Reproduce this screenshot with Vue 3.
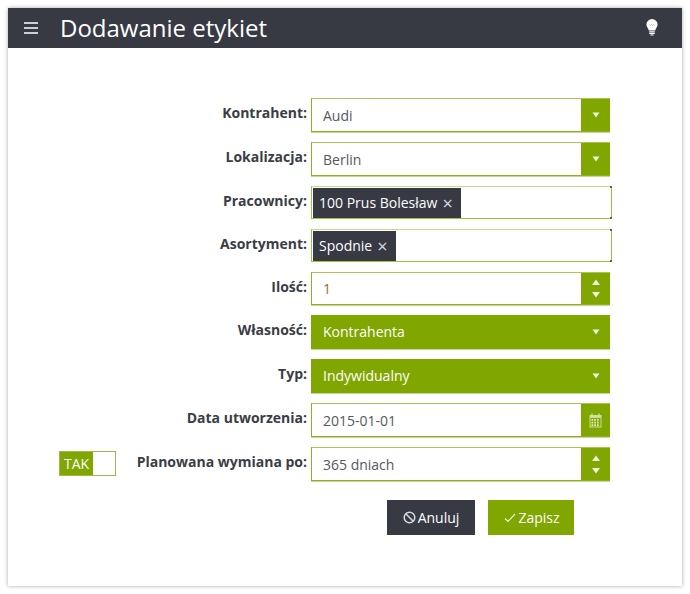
<script setup>
const wiersze = [
  { etykieta: 'Kontrahent:', wartosc: 'Audi', typ: 'select' },
  { etykieta: 'Lokalizacja:', wartosc: 'Berlin', typ: 'select' },
  { etykieta: 'Pracownicy:', tag: '100 Prus Bolesław', typ: 'tag', niski: true },
  { etykieta: 'Asortyment:', tag: 'Spodnie', typ: 'tag', niski: true },
  { etykieta: 'Ilość:', wartosc: '1', typ: 'spin', kolor: true, niski: true },
  { etykieta: 'Własność:', wartosc: 'Kontrahenta', typ: 'pelny' },
  { etykieta: 'Typ:', wartosc: 'Indywidualny', typ: 'pelny' },
  { etykieta: 'Data utworzenia:', wartosc: '2015-01-01', typ: 'data' },
  { etykieta: 'Planowana wymiana po:', wartosc: '365 dniach', typ: 'spin', przelacznik: true }
]
</script>

<template>
  <div class="strona">
    <div class="panel">
      <header class="naglowek">
        <svg class="menu" width="14" height="12" viewBox="0 0 14 12">
          <path d="M0 1h14M0 6h14M0 11h14" stroke="#fff" stroke-width="1.6" fill="none" />
        </svg>
        <h1 class="tytul">Dodawanie etykiet</h1>
        <svg class="zarowka" width="12" height="18" viewBox="0 0 12 18">
          <path d="M6 0a5.600 5.600 0 0 0-5.600 5.600c0 2.400 1.900 3.600 2.400 6h6.400c.5-2.400 2.400-3.600 2.400-6A5.600 5.600 0 0 0 6 0z" fill="#fff" />
          <path d="M3.500 5.500l1 1 1-1 1 1 1-1 1 1" stroke="#9a9ca2" stroke-width=".7" fill="none" />
          <path d="M3.200 12.800h5.600M3.200 14.400h5.600M4.400 16h3.200" stroke="#fff" stroke-width="1.100" fill="none" />
        </svg>
      </header>

      <form class="formularz">
        <div v-for="w in wiersze" :key="w.etykieta" class="wiersz" :class="{ niski: w.niski }">
          <div class="przelacznik-kol">
            <div v-if="w.przelacznik" class="przelacznik">
              <span class="tak">TAK</span>
              <span class="uchwyt"></span>
            </div>
          </div>
          <label class="etykieta">{{ w.etykieta }}</label>

          <div class="pole" :class="{ pelne: w.typ === 'pelny', tagi: w.typ === 'tag' }">
            <span v-if="w.typ === 'tag'" class="tag">{{ w.tag }}<span class="usun">×</span></span>
            <span v-else class="wartosc" :class="{ brazowa: w.kolor }">{{ w.wartosc }}</span>

            <span v-if="w.typ !== 'tag'" class="przycisk">
              <svg v-if="w.typ === 'select' || w.typ === 'pelny'" width="8" height="6" viewBox="0 0 8 6">
                <path d="M.5 .5h7L4 5.500z" fill="#eef3dc" />
              </svg>
              <svg v-else-if="w.typ === 'spin'" class="strzalki" width="8" height="19" viewBox="0 0 8 19">
                <path d="M0 6h8L4 .5z" fill="#eef3dc" />
                <path d="M0 13h8L4 18.500z" fill="#eef3dc" />
              </svg>
              <svg v-else width="13" height="15" viewBox="0 0 13 15">
                <path d="M.5 2h12v12.500H.5z" fill="#cfdd9e" />
                <path d="M3 .5v3M10 .5v3" stroke="#cfdd9e" stroke-width="1.400" />
                <path d="M1.500 5h10v8.500h-10z" fill="#80a600" />
                <path d="M2.500 6h1.700v1.700H2.500zM5.200 6h1.700v1.700H5.200zM8 6h1.700v1.700H8zM2.500 8.700h1.700v1.700H2.500zM5.200 8.700h1.700v1.700H5.200zM8 8.700h1.700v1.700H8zM2.500 11.300h1.700v1.700H2.500zM5.200 11.300h1.700v1.700H5.200zM8 11.300h1.700v1.700H8z" fill="#e4ecc4" />
              </svg>
            </span>
          </div>
        </div>

        <div class="akcje">
          <button type="button" class="btn anuluj">
            <svg width="13" height="13" viewBox="0 0 13 13">
              <circle cx="6.500" cy="6.500" r="5.300" stroke="#d8d9db" stroke-width="1.500" fill="none" />
              <path d="M2.800 2.800l7.400 7.400" stroke="#d8d9db" stroke-width="1.500" />
            </svg>
            Anuluj
          </button>
          <button type="button" class="btn zapisz">
            <svg width="12" height="10" viewBox="0 0 12 10">
              <path d="M1 5.500l3 3L11 1" stroke="#eef3dc" stroke-width="1.100" fill="none" />
            </svg>
            Zapisz
          </button>
        </div>
      </form>
    </div>
  </div>
</template>

<style>
html, body {
  margin: 0;
  background: #fff;
}
</style>

<style scoped>
.strona {
  width: 690px;
  height: 594px;
  padding: 8px;
  box-sizing: border-box;
  font-family: "Open Sans", sans-serif;
}

.panel {
  width: 674px;
  height: 578px;
  background: #fff;
  box-shadow: 0 0 4px rgba(0, 0, 0, 0.35);
}

.naglowek {
  height: 40px;
  background: #373a43;
  display: flex;
  align-items: center;
  color: #fff;
  padding: 0 24px 0 16px;
}

.menu {
  flex: none;
}

.tytul {
  margin: 0 0 1px 22px;
  font-size: 24px;
  font-weight: 400;
  flex: 1;
}

.formularz {
  padding: 50px 72px 0 51px;
}

.wiersz {
  display: grid;
  grid-template-columns: 57px 191px 299px;
  height: 34px;
  margin-bottom: 10px;
  align-items: start;
}

.wiersz.niski {
  height: 33px;
}

.przelacznik {
  width: 57px;
  height: 25px;
  margin-top: 4px;
  box-sizing: border-box;
  border: 1px solid #9fb94f;
  display: flex;
}

.tak {
  width: 33px;
  background: #80a600;
  color: #fff;
  font-size: 14px;
  line-height: 23px;
  text-align: center;
}

.uchwyt {
  flex: 1;
  background: #fff;
}

.etykieta {
  text-align: right;
  font-size: 14px;
  font-weight: 700;
  line-height: 30px;
  color: #3a3d46;
}

.pole {
  margin-left: 4px;
  width: 299px;
  height: 34px;
  box-sizing: border-box;
  border: 1px solid #8fb021;
  border-top-color: #a8c452;
  box-shadow: 0 1px 0 #c5d69a;
  display: flex;
  align-items: center;
  justify-content: space-between;
  background: #fff;
}

.niski .pole {
  height: 33px;
}

.pole.tagi {
  position: relative;
  width: 301px;
  justify-content: flex-start;
  padding-left: 1px;
  border-color: #99c43a;
  border-top-color: #c3dc8a;
  box-shadow: none;
}

/* male ciemne narozniki po prawej */
.pole.tagi::before,
.pole.tagi::after {
  content: "";
  position: absolute;
  right: -1px;
  width: 2px;
  height: 2px;
  background: #5a6060;
}

.pole.tagi::before {
  top: -1px;
}

.pole.tagi::after {
  bottom: -1px;
}

.pole.pelne {
  background: #80a600;
  border-color: #80a600;
  color: #fff;
}

.wartosc {
  padding-left: 11px;
  font-size: 14px;
  color: #555861;
}

.pelne .wartosc {
  color: #fff;
  padding-bottom: 2px;
}

.brazowa {
  color: #a4663a;
}

.przycisk {
  width: 29px;
  height: 100%;
  margin-right: -1px;
  background: #80a600;
  display: flex;
  align-items: center;
  justify-content: center;
}

.tag {
  height: 30px;
  background: #373a43;
  color: #fff;
  font-size: 14px;
  display: flex;
  align-items: center;
  padding: 0 8px 0 6px;
}

.usun {
  margin-left: 5px;
  font-size: 18px;
  line-height: 1;
  color: #d8d9db;
}

.akcje {
  display: flex;
  gap: 13px;
  margin-top: 19px;
  padding-left: 328px;
}

.btn {
  height: 35px;
  border: 0;
  padding: 0;
  font-family: inherit;
  font-size: 14px;
  color: #fff;
  display: flex;
  align-items: center;
  justify-content: center;
  gap: 2px;
}

.anuluj {
  width: 88px;
  background: #373a43;
}

.zapisz {
  width: 86px;
  padding-left: 2px;
  background: #80a600;
}
</style>
